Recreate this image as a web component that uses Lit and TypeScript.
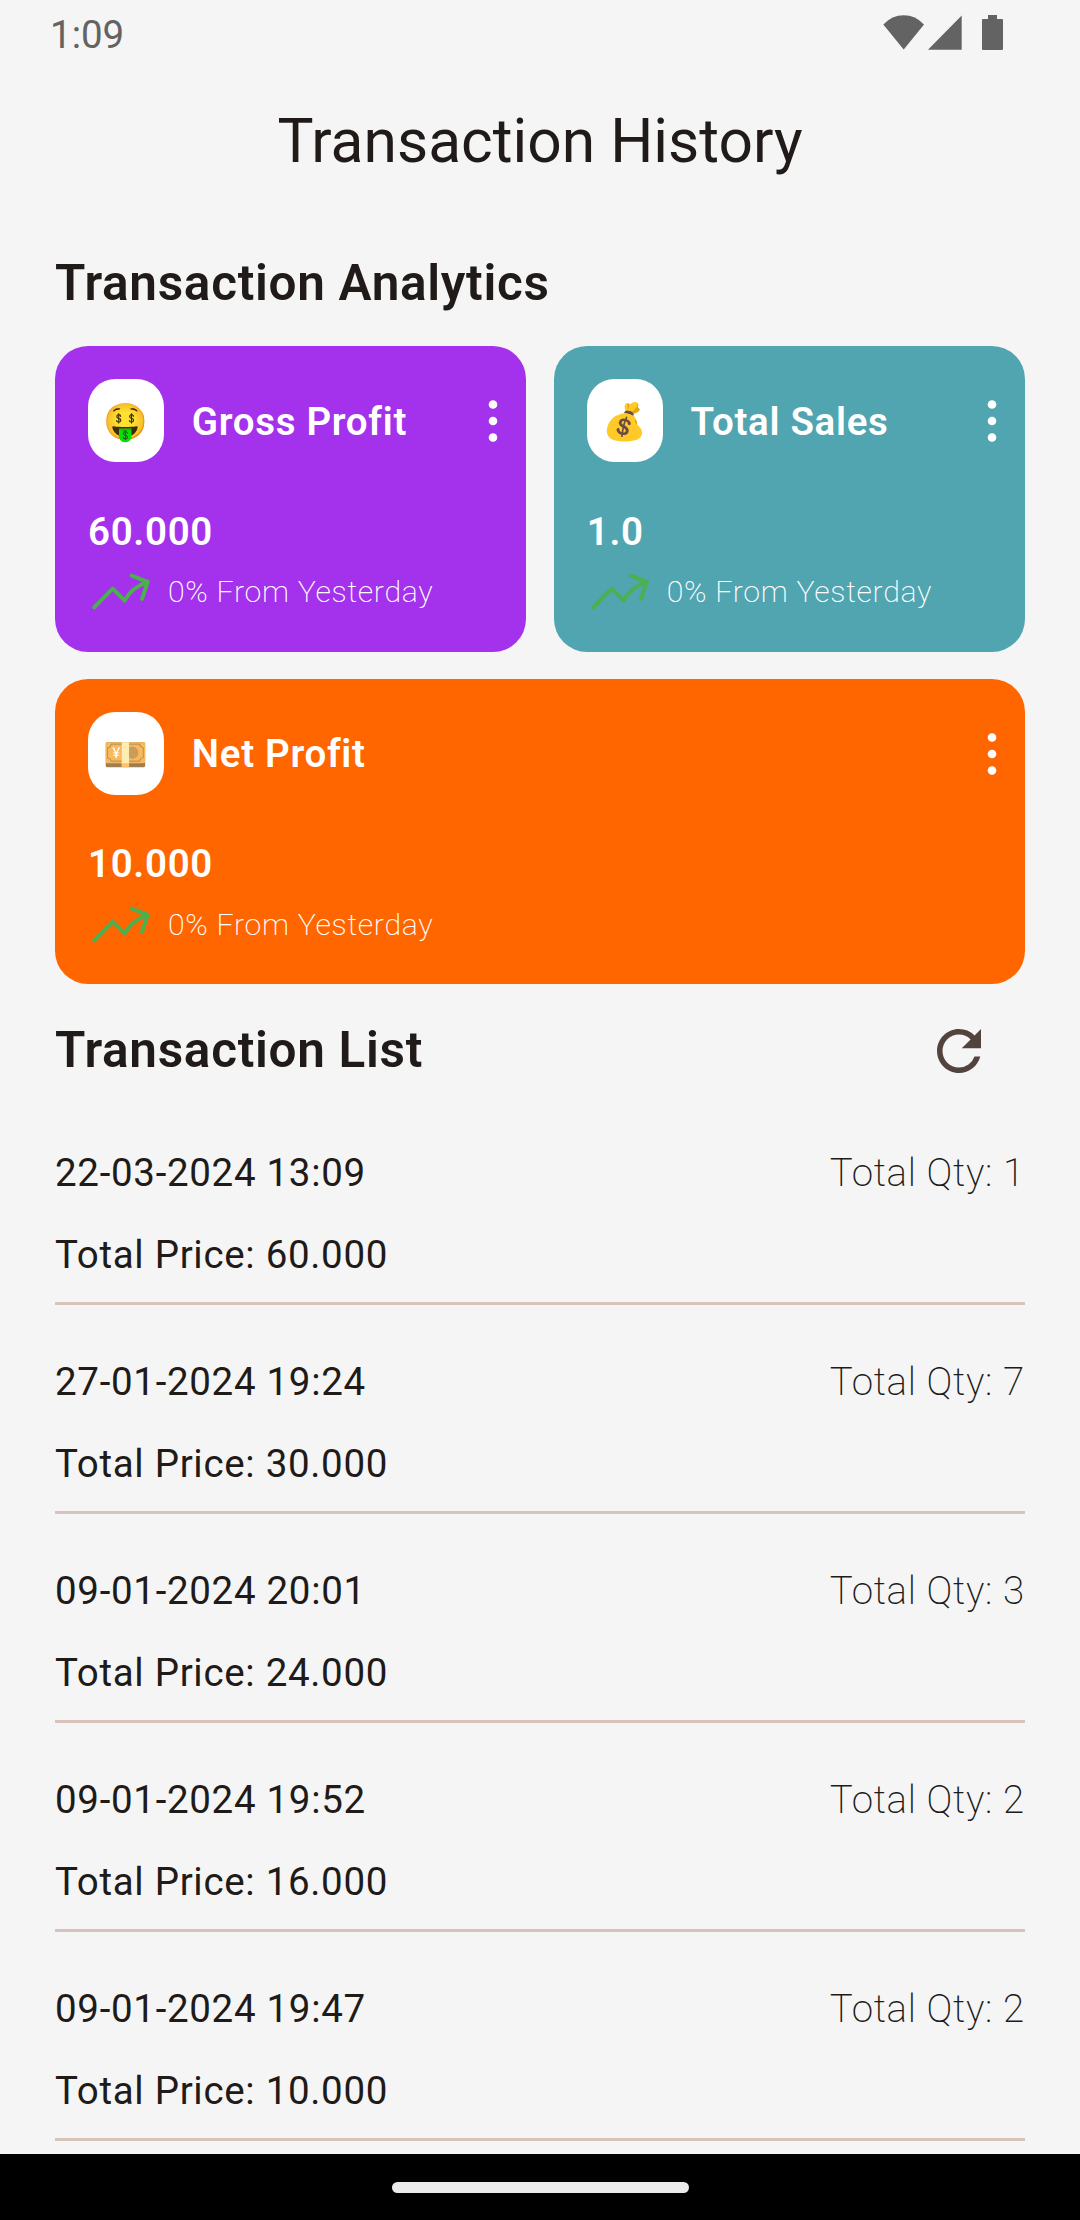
import { LitElement, html, css, svg } from "lit";
import { customElement, property } from "lit/decorators.js";

interface Transaction {
  date: string;
  qty: number;
  price: string;
}

const TRANSACTIONS: Transaction[] = [
  { date: "22-03-2024 13:09", qty: 1, price: "60.000" },
  { date: "27-01-2024 19:24", qty: 7, price: "30.000" },
  { date: "09-01-2024 20:01", qty: 3, price: "24.000" },
  { date: "09-01-2024 19:52", qty: 2, price: "16.000" },
  { date: "09-01-2024 19:47", qty: 2, price: "10.000" },
];

@customElement("status-bar")
export class StatusBar extends LitElement {
  static styles = css`
    :host {
      display: flex;
      justify-content: space-between;
      height: 66px;
      padding: 0 76px 0 50px;
      box-sizing: border-box;
      color: #636363;
    }
    .time {
      font-size: 38.5px;
      line-height: 70px;
    }
    .icons {
      display: block;
      width: 122px;
      height: 66px;
    }
  `;

  render() {
    return html`
      <div class="time">1:09</div>
      <svg class="icons" viewBox="882 0 122 66" fill="currentColor">
        <path d="M883.3 24.5 Q892 15.3 903.7 15.3 Q915.500 15.3 924 24.5 L903.7 49.4 Z" />
        <path d="M961.7 15.500 V49.700 H928 Z" />
        <path d="M988 15 H997 V19 H1002 Q1003 19 1003 20 V49 Q1003 50 1002 50 H983 Q982 50 982 49 V20 Q982 19 983 19 H988 Z" />
      </svg>
    `;
  }
}

@customElement("stat-card")
export class StatCard extends LitElement {
  @property() label = "";
  @property() value = "";
  @property() emoji = "";

  static styles = css`
    :host {
      display: block;
      height: 305.3px;
      box-sizing: border-box;
      padding: 33px 0 0 33px;
      border-radius: 33px;
      color: #fff;
    }
    .head {
      display: flex;
      align-items: center;
      height: 83px;
    }
    .badge {
      display: flex;
      align-items: center;
      justify-content: center;
      width: 76.3px;
      height: 83px;
      padding-top: 2px;
      box-sizing: border-box;
      border-radius: 27.5px;
      background: #fff;
      font-family: "Noto Color Emoji", sans-serif;
      font-size: 36px;
      line-height: 1;
    }
    .label {
      flex: 1;
      margin-top: 0.6px;
      margin-left: 27.5px;
      font-size: 38.5px;
      line-height: 55px;
      font-weight: 600;
      letter-spacing: 0.69px;
    }
    .more {
      width: 12px;
      height: 44px;
      margin-right: 27px;
    }
    .value {
      margin-top: 41.3px;
      font-size: 38.5px;
      line-height: 55px;
      font-weight: 600;
      letter-spacing: 0.69px;
    }
    .trend {
      display: flex;
      margin-top: 10.7px;
    }
    .arrow {
      width: 72px;
      height: 44px;
      margin-right: 8px;
    }
    .note {
      margin-top: 0.8px;
      font-size: 30.25px;
      line-height: 44px;
      font-weight: 200;
      letter-spacing: 0.69px;
    }
  `;

  render() {
    return html`
      <div class="head">
        <div class="badge">${this.emoji}</div>
        <div class="label">${this.label}</div>
        <svg class="more" viewBox="0 0 12 44" fill="#fff">
          ${[5.5, 22, 38.5].map((y) => svg`<circle cx="6" cy=${y} r="4.3" />`)}
        </svg>
      </div>
      <div class="value">${this.value}</div>
      <div class="trend">
        <svg
          class="arrow"
          viewBox="0 0 72 44"
          fill="none"
          stroke="#4caf50"
          stroke-width="4"
          stroke-linecap="round"
          stroke-linejoin="round"
        >
          <path d="M6.2 38.3 L24.7 19.6 L36.7 31.6 Q43.5 18.5 59.7 12.9" />
          <path d="M43.7 6.6 L59.7 12.9 L54 29.9" />
        </svg>
        <div class="note">0% From Yesterday</div>
      </div>
    `;
  }
}

@customElement("transaction-row")
export class TransactionRow extends LitElement {
  @property({ attribute: false }) item!: Transaction;

  static styles = css`
    :host {
      display: block;
      height: 209px;
      box-sizing: border-box;
      padding-top: 49px;
      font-size: 38.5px;
      line-height: 55px;
      letter-spacing: 0.69px;
    }
    .top {
      display: flex;
      justify-content: space-between;
    }
    .qty {
      font-weight: 200;
    }
    .price {
      margin-top: 27px;
    }
    .rule {
      height: 3px;
      margin-top: 20px;
      background: #d8c2bc;
    }
  `;

  render() {
    return html`
      <div class="top">
        <div>${this.item.date}</div>
        <div class="qty">Total Qty: ${this.item.qty}</div>
      </div>
      <div class="price">Total Price: ${this.item.price}</div>
      <div class="rule"></div>
    `;
  }
}

@customElement("app-root")
export class AppRoot extends LitElement {
  static styles = css`
    :host {
      display: flex;
      flex-direction: column;
      width: 1080px;
      height: 2220px;
      overflow: hidden;
      background: #f5f5f5;
      color: #201a18;
      font-family: Roboto, "Noto Sans", sans-serif;
    }
    .title {
      height: 154px;
      text-align: center;
      font-size: 60.5px;
      line-height: 151px;
    }
    .content {
      flex: 1;
      min-height: 0;
      overflow: hidden;
      padding: 0 55px;
    }
    .heading {
      font-size: 49.5px;
      line-height: 70px;
      font-weight: 600;
      letter-spacing: 0.69px;
    }
    .analytics {
      padding-top: 28px;
    }
    .cards {
      display: grid;
      grid-template-columns: 1fr 1fr;
      gap: 27.5px;
      margin-top: 28.3px;
    }
    .purple {
      background: #a431ec;
    }
    .teal {
      background: #51a5b1;
    }
    .orange {
      background: #ff6600;
      grid-column: span 2;
    }
    .list-head {
      display: flex;
      justify-content: space-between;
      align-items: center;
      height: 112px;
      padding-right: 33px;
    }
    .refresh {
      width: 66px;
      height: 66px;
      margin-top: 22px;
    }
    .list-title {
      margin-top: 20px;
    }
    .nav {
      display: flex;
      align-items: center;
      justify-content: center;
      height: 66px;
      background: #000;
    }
    .pill {
      width: 297px;
      height: 11px;
      border-radius: 6px;
      background: #ebebeb;
    }
  `;

  render() {
    return html`
      <status-bar></status-bar>
      <div class="title">Transaction History</div>
      <div class="content">
        <div class="heading analytics">Transaction Analytics</div>
        <div class="cards">
          <stat-card class="purple" label="Gross Profit" value="60.000" emoji="🤑"></stat-card>
          <stat-card class="teal" label="Total Sales" value="1.0" emoji="💰"></stat-card>
          <stat-card class="orange" label="Net Profit" value="10.000" emoji="💴"></stat-card>
        </div>
        <div class="list-head">
          <div class="heading list-title">Transaction List</div>
          <svg class="refresh" viewBox="0 0 24 24" fill="#53433f">
            <path
              d="M17.65 6.35A7.958 7.958 0 0 0 12 4c-4.42 0-7.99 3.58-7.99 8s3.57 8 7.99 8c3.73 0 6.84-2.55 7.73-6h-2.08A5.99 5.99 0 0 1 12 18c-3.31 0-6-2.69-6-6s2.69-6 6-6c1.66 0 3.14.69 4.22 1.78L13 11h7V4z"
            />
          </svg>
        </div>
        ${TRANSACTIONS.map((t) => html`<transaction-row .item=${t}></transaction-row>`)}
      </div>
      <div class="nav"><div class="pill"></div></div>
    `;
  }
}
